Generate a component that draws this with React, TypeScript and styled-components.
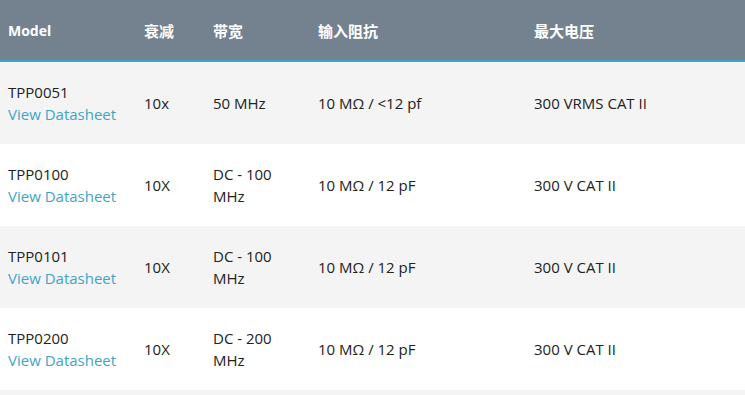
import React from "react";
import styled, { createGlobalStyle } from "styled-components";

const GlobalStyle = createGlobalStyle`
  html, body {
    margin: 0;
    padding: 0;
    background: #f4f4f4;
  }
  body {
    font-family: "Open Sans", "Noto Sans", "Noto Sans CJK SC", sans-serif;
    color: #222222;
  }
`;

const Table = styled.div`
  display: grid;
  grid-template-columns: 136px 69px 105px 216px 1fr;
  width: 745px;
`;

const HeaderCell = styled.div<{ $cjk?: boolean }>`
  height: 60px;
  display: flex;
  align-items: center;
  padding: 0 8px;
  background: #74828f;
  border-bottom: 2px solid #3ea2c2;
  color: #ffffff;
  font-weight: 700;
  font-size: ${(p) => (p.$cjk ? "15px" : "14px")};
  font-family: ${(p) =>
    p.$cjk
      ? `"Noto Sans CJK SC", "Open Sans", sans-serif`
      : `"Open Sans", "Noto Sans CJK SC", sans-serif`};
`;

const Cell = styled.div<{ $alt: boolean }>`
  height: 82px;
  box-sizing: border-box;
  display: flex;
  flex-direction: column;
  justify-content: center;
  padding: 0 8px;
  background: ${(p) => (p.$alt ? "#f4f4f4" : "#ffffff")};
  font-size: 15px;
  line-height: 22px;
  color: #222222;
`;

const Link = styled.a`
  color: #3ea5c9;
  text-decoration: none;
`;

const headers = [
  { label: "Model", cjk: false },
  { label: "衰减", cjk: true },
  { label: "带宽", cjk: true },
  { label: "输入阻抗", cjk: true },
  { label: "最大电压", cjk: true },
];

const rows = [
  { model: "TPP0051", att: "10x", bw: "50 MHz", imp: "10 MΩ / <12 pf", volt: "300 VRMS CAT II" },
  { model: "TPP0100", att: "10X", bw: "DC - 100 MHz", imp: "10 MΩ / 12 pF", volt: "300 V CAT II" },
  { model: "TPP0101", att: "10X", bw: "DC - 100 MHz", imp: "10 MΩ / 12 pF", volt: "300 V CAT II" },
  { model: "TPP0200", att: "10X", bw: "DC - 200 MHz", imp: "10 MΩ / 12 pF", volt: "300 V CAT II" },
];

export default function App() {
  return (
    <>
      <GlobalStyle />
      <Table>
        {headers.map((h) => (
          <HeaderCell key={h.label} $cjk={h.cjk}>
            {h.label}
          </HeaderCell>
        ))}
        {rows.map((r, i) => {
          const alt = i % 2 === 0;
          return (
            <React.Fragment key={r.model}>
              <Cell $alt={alt}>
                <span>{r.model}</span>
                <Link href="#">View Datasheet</Link>
              </Cell>
              <Cell $alt={alt}>{r.att}</Cell>
              <Cell $alt={alt}>
                <span>{r.bw}</span>
              </Cell>
              <Cell $alt={alt}>{r.imp}</Cell>
              <Cell $alt={alt}>{r.volt}</Cell>
            </React.Fragment>
          );
        })}
      </Table>
    </>
  );
}
